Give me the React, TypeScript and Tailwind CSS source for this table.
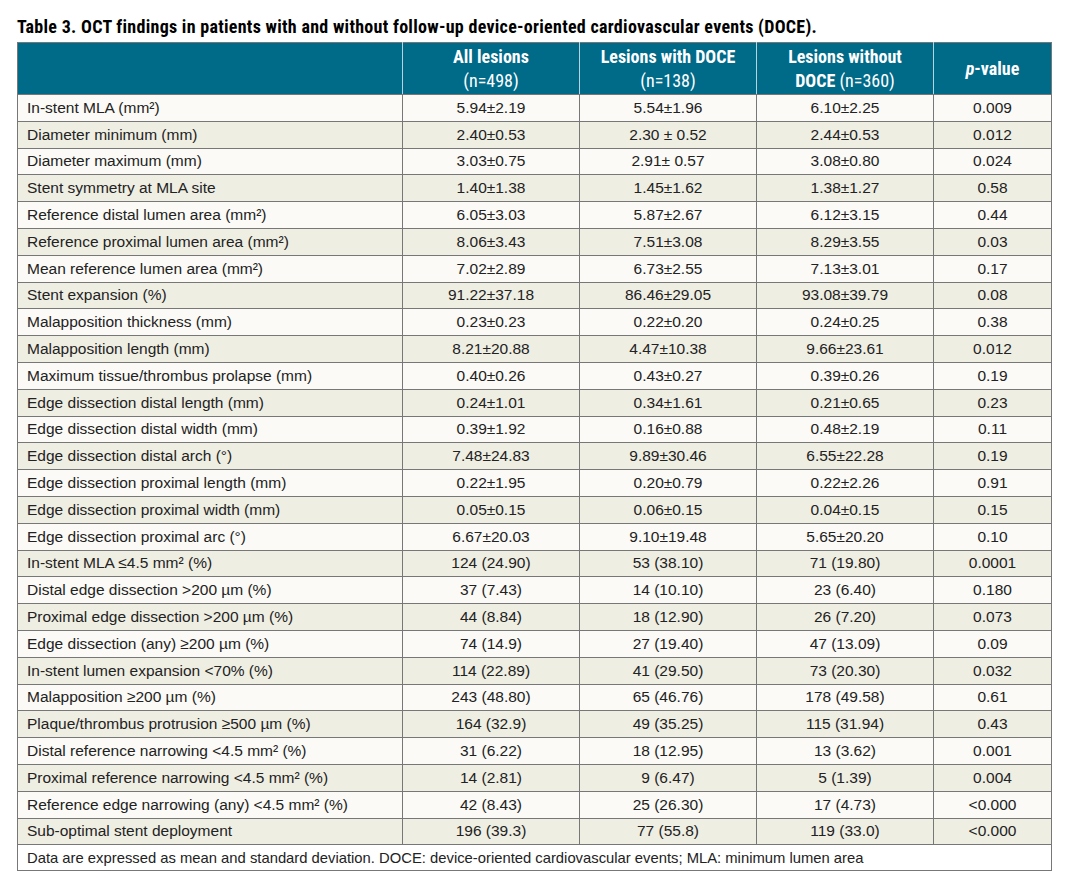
const rows: [string, string, string, string, string][] = [
  ["In-stent MLA (mm²)", "5.94±2.19", "5.54±1.96", "6.10±2.25", "0.009"],
  ["Diameter minimum (mm)", "2.40±0.53", "2.30 ± 0.52", "2.44±0.53", "0.012"],
  ["Diameter maximum (mm)", "3.03±0.75", "2.91± 0.57", "3.08±0.80", "0.024"],
  ["Stent symmetry at MLA site", "1.40±1.38", "1.45±1.62", "1.38±1.27", "0.58"],
  ["Reference distal lumen area (mm²)", "6.05±3.03", "5.87±2.67", "6.12±3.15", "0.44"],
  ["Reference proximal lumen area (mm²)", "8.06±3.43", "7.51±3.08", "8.29±3.55", "0.03"],
  ["Mean reference lumen area (mm²)", "7.02±2.89", "6.73±2.55", "7.13±3.01", "0.17"],
  ["Stent expansion (%)", "91.22±37.18", "86.46±29.05", "93.08±39.79", "0.08"],
  ["Malapposition thickness (mm)", "0.23±0.23", "0.22±0.20", "0.24±0.25", "0.38"],
  ["Malapposition length (mm)", "8.21±20.88", "4.47±10.38", "9.66±23.61", "0.012"],
  ["Maximum tissue/thrombus prolapse (mm)", "0.40±0.26", "0.43±0.27", "0.39±0.26", "0.19"],
  ["Edge dissection distal length (mm)", "0.24±1.01", "0.34±1.61", "0.21±0.65", "0.23"],
  ["Edge dissection distal width (mm)", "0.39±1.92", "0.16±0.88", "0.48±2.19", "0.11"],
  ["Edge dissection distal arch (°)", "7.48±24.83", "9.89±30.46", "6.55±22.28", "0.19"],
  ["Edge dissection proximal length (mm)", "0.22±1.95", "0.20±0.79", "0.22±2.26", "0.91"],
  ["Edge dissection proximal width (mm)", "0.05±0.15", "0.06±0.15", "0.04±0.15", "0.15"],
  ["Edge dissection proximal arc (°)", "6.67±20.03", "9.10±19.48", "5.65±20.20", "0.10"],
  ["In-stent MLA ≤4.5 mm² (%)", "124 (24.90)", "53 (38.10)", "71 (19.80)", "0.0001"],
  ["Distal edge dissection >200 µm (%)", "37 (7.43)", "14 (10.10)", "23 (6.40)", "0.180"],
  ["Proximal edge dissection >200 µm (%)", "44 (8.84)", "18 (12.90)", "26 (7.20)", "0.073"],
  ["Edge dissection (any) ≥200 µm (%)", "74 (14.9)", "27 (19.40)", "47 (13.09)", "0.09"],
  ["In-stent lumen expansion <70% (%)", "114 (22.89)", "41 (29.50)", "73 (20.30)", "0.032"],
  ["Malapposition ≥200 µm (%)", "243 (48.80)", "65 (46.76)", "178 (49.58)", "0.61"],
  ["Plaque/thrombus protrusion ≥500 µm (%)", "164 (32.9)", "49 (35.25)", "115 (31.94)", "0.43"],
  ["Distal reference narrowing <4.5 mm² (%)", "31 (6.22)", "18 (12.95)", "13 (3.62)", "0.001"],
  ["Proximal reference narrowing <4.5 mm² (%)", "14 (2.81)", "9 (6.47)", "5 (1.39)", "0.004"],
  ["Reference edge narrowing (any) <4.5 mm² (%)", "42 (8.43)", "25 (26.30)", "17 (4.73)", "<0.000"],
  ["Sub-optimal stent deployment", "196 (39.3)", "77 (55.8)", "119 (33.0)", "<0.000"],
];

export default function App() {
  return (
    <div className="min-h-[889px] w-[1069px] bg-white pl-[17px] pt-[15px] font-['Liberation_Sans',Arial,sans-serif] text-[#222]">
      <h1 className="font-['Roboto',sans-serif] font-stretch-[75%] text-[18px] font-bold leading-[24px] tracking-[0.28px] text-black">
        Table 3. OCT findings in patients with and without follow-up device-oriented cardiovascular events (DOCE).
      </h1>
      <table className="mt-[3px] w-[1034px] table-fixed border-collapse text-[15.5px]">
        <colgroup>
          <col className="w-[385px]" />
          <col className="w-[177px]" />
          <col className="w-[177px]" />
          <col className="w-[177px]" />
          <col className="w-[118px]" />
        </colgroup>
        <thead>
          <tr className="h-[52px] bg-[#006a89] font-['Roboto',sans-serif] font-stretch-[75%] text-[18px] font-bold leading-[24px] text-white">
            <th className="border border-[#777] border-r-[#b7d3de]"></th>
            <th className="border border-x-[#b7d3de] border-y-[#777] px-1 text-center">
              All lesions
              <br />
              <span className="font-normal">(n=498)</span>
            </th>
            <th className="border border-x-[#b7d3de] border-y-[#777] px-1 text-center whitespace-nowrap">
              Lesions with DOCE
              <br />
              <span className="font-normal">(n=138)</span>
            </th>
            <th className="border border-x-[#b7d3de] border-y-[#777] px-1 text-center whitespace-nowrap">
              Lesions without
              <br />
              DOCE <span className="font-normal">(n=360)</span>
            </th>
            <th className="border border-[#777] border-l-[#b7d3de] px-1 text-center">
              <i>p</i>-value
            </th>
          </tr>
        </thead>
        <tbody>
          {rows.map((r, i) => (
            <tr key={r[0]} className={`h-[26.8px] leading-[18px] ${i % 2 === 0 ? "bg-[#fbfaf6]" : "bg-[#efeee3]"}`}>
              <td className="border border-[#777] pl-[9px] text-left">{r[0]}</td>
              <td className="border border-[#777] text-center">{r[1]}</td>
              <td className="border border-[#777] text-center">{r[2]}</td>
              <td className="border border-[#777] text-center">{r[3]}</td>
              <td className="border border-[#777] text-center">{r[4]}</td>
            </tr>
          ))}
          <tr className="h-[26px] bg-white">
            <td colSpan={5} className="border border-[#777] pl-[9px] text-left text-[14.8px] leading-[18px]">
              Data are expressed as mean and standard deviation. DOCE: device-oriented cardiovascular events; MLA: minimum lumen area
            </td>
          </tr>
        </tbody>
      </table>
    </div>
  );
}
